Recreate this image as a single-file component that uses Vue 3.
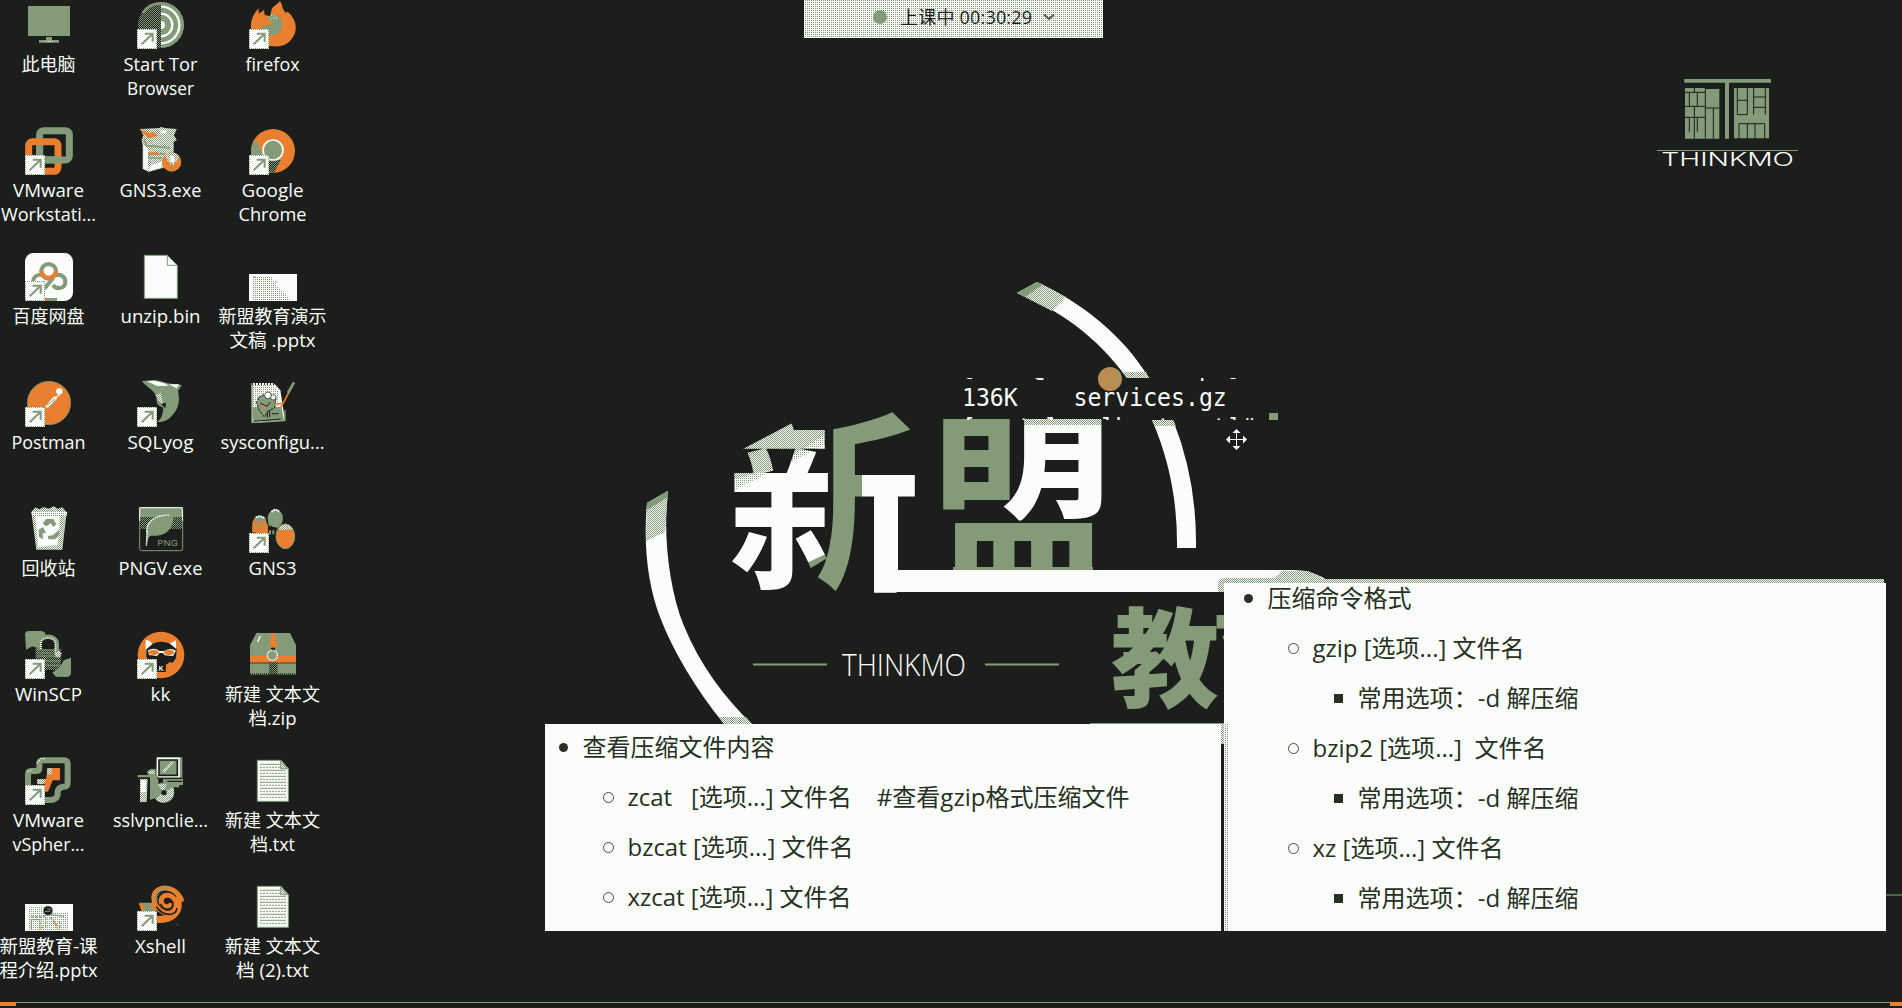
<script setup>
const columns = [
  [
    { icon: 'pc', lines: ['此电脑'], widths: [54] },
    { icon: 'vmware', link: true, lines: ['VMware', 'Workstati...'], widths: [71, 95] },
    { icon: 'netdisk', link: true, lines: ['百度网盘'], widths: [72] },
    { icon: 'postman', link: true, lines: ['Postman'], widths: [74] },
    { icon: 'bin', lines: ['回收站'], widths: [54] },
    { icon: 'winscp', link: true, lines: ['WinSCP'], widths: [67] },
    { icon: 'vsphere', link: true, lines: ['VMware', 'vSpher...'], widths: [71, 72] },
    { icon: 'course', lines: ['新盟教育-课', '程介绍.pptx'], widths: [98, 98] },
  ],
  [
    { icon: 'tor', link: true, lines: ['Start Tor', 'Browser'], widths: [74, 67] },
    { icon: 'box', lines: ['GNS3.exe'], widths: [82] },
    { icon: 'file', lines: ['unzip.bin'], widths: [80] },
    { icon: 'dolphin', link: true, lines: ['SQLyog'], widths: [66] },
    { icon: 'png', lines: ['PNGV.exe'], widths: [84] },
    { icon: 'kk', link: true, lines: ['kk'], widths: [20] },
    { icon: 'installer', lines: ['sslvpnclie...'], widths: [95] },
    { icon: 'xshell', link: true, lines: ['Xshell'], widths: [51] },
  ],
  [
    { icon: 'firefox', link: true, lines: ['firefox'], widths: [54] },
    { icon: 'chrome', link: true, lines: ['Google', 'Chrome'], widths: [62, 68] },
    { icon: 'slides', lines: ['新盟教育演示', '文稿 .pptx'], widths: [108, 86] },
    { icon: 'notepad', lines: ['sysconfigu...'], widths: [104] },
    { icon: 'gns', link: true, lines: ['GNS3'], widths: [48] },
    { icon: 'zip', lines: ['新建 文本文', '档.zip'], widths: [95, 48] },
    { icon: 'text', lines: ['新建 文本文', '档.txt'], widths: [95, 45] },
    { icon: 'text', lines: ['新建 文本文', '档 (2).txt'], widths: [95, 73] },
  ],
]

const viewNotes = [
  { level: 1, text: '查看压缩文件内容', width: 192 },
  { level: 2, text: 'zcat   [选项...] 文件名    #查看gzip格式压缩文件', width: 502 },
  { level: 2, text: 'bzcat [选项...] 文件名', width: 226 },
  { level: 2, text: 'xzcat [选项...] 文件名', width: 224 },
]

const formatNotes = [
  { level: 1, text: '压缩命令格式', width: 144 },
  { level: 2, text: 'gzip [选项...] 文件名', width: 212 },
  { level: 3, text: '常用选项：-d 解压缩', width: 221 },
  { level: 2, text: 'bzip2 [选项...]  文件名', width: 234 },
  { level: 3, text: '常用选项：-d 解压缩', width: 221 },
  { level: 2, text: 'xz [选项...] 文件名', width: 191 },
  { level: 3, text: '常用选项：-d 解压缩', width: 221 },
]
</script>

<template>
  <main class="desktop">
    <svg class="sprite" aria-hidden="true">
      <defs>
        <pattern id="mesh" width="6" height="6" patternUnits="userSpaceOnUse">
          <path d="M0 0h3v3h-3zM3 3h3v3h-3z" fill="#839b79" />
        </pattern>
        <pattern id="dots" width="6" height="6" patternUnits="userSpaceOnUse">
          <path d="M0 0h6v6h-6z" fill="#fbfdfa" /><path d="M0 0h3v3h-3z" fill="#839b79" />
        </pattern>
        <pattern id="weave" width="6" height="6" patternUnits="userSpaceOnUse">
          <path d="M0 0h6v6h-6z" fill="#fbfdfa" /><path d="M0 0h3v3h-3zM3 3h3v3h-3z" fill="#839b79" />
        </pattern>
      </defs>

      <symbol id="i-link" viewBox="0 0 60 60">
        <path d="M0 0h60v60h-60z" fill="#fbfdfa" />
        <path d="M1.500 0v60M58.500 0v60M0 1.500h60M0 58.500h60" stroke="#839b79" stroke-width="3" stroke-dasharray="3 3" />
        <path d="M14 46L46 15M23 14h24v24" fill="none" stroke="#839b79" stroke-width="6" />
      </symbol>

      <symbol id="i-pc" viewBox="0 0 144 144">
        <path d="M9 15h126v90H9z" fill="#839b79" />
        <path d="M63 108h18v9h21v8H42v-8h21z" fill="#839b79" />
        <path d="M63 121h24" stroke="#fbfdfa" stroke-width="3" stroke-dasharray="3 3" />
      </symbol>

      <symbol id="i-tor" viewBox="0 0 144 144">
        <circle cx="72" cy="72" r="69" fill="url(#mesh)" />
        <path d="M14 34A69 69 0 0 1 72 3h6v8h-8A61 61 0 0 0 20 38z" fill="#839b79" />
        <path d="M72 3a69 69 0 0 1 0 138z" fill="#839b79" />
        <path d="M72 60a12 12 0 0 1 0 24z" fill="#fbfdfa" />
        <path d="M72 38a34 34 0 0 1 0 68M72 17a55 55 0 0 1 0 110" fill="none" stroke="#fbfdfa" stroke-width="7" />
      </symbol>

      <symbol id="i-firefox" viewBox="0 0 144 144">
        <path d="M6 81C4 58 12 40 29 22v16l16-11 2 15 16 3 6-24L93 0c6 8 7 19 9 24l9 12 5-4c20 18 29 40 22 63-10 31-38 44-66 41C35 134 9 110 6 81z" fill="#ea7f30" />
        <path d="M57 48c13-14 35-7 40 11 7 20-3 40-23 43-20 2-36-12-37-28h22l12-12-18-7z" fill="#839b79" />
        <path d="M58 48l10-6 11 3 8 7M64 55l11-5 12 7" fill="none" stroke="#fbfdfa" stroke-width="3" stroke-dasharray="3 6" />
        <path d="M60 45l5-25 24-19" fill="none" stroke="#1c1e1b" stroke-width="5" />
      </symbol>

      <symbol id="i-vmware" viewBox="0 0 144 144">
        <rect x="44" y="11" width="89" height="88" rx="12" fill="none" stroke="#839b79" stroke-width="21" />
        <rect x="11" y="44" width="88" height="89" rx="12" fill="none" stroke="#ea7f30" stroke-width="21" />
        <path d="M34 55h20v54H34zM55 88h57v21H55z" fill="#839b79" />
      </symbol>

      <symbol id="i-box" viewBox="0 0 144 144">
        <path d="M9 6l60-3 2-4 12 4 36 3-8 19 8 14-9 6v65l-13 8-62 17-18-9V57L14 39l5-15z" fill="url(#weave)" />
        <path d="M9 6l28 11 16-1 10 11-28 7-4-4-12-9z" fill="#ea7f30" />
        <path d="M20 36l9 20 26 2 44 5M31 83l52-3M32 93h43" fill="none" stroke="#839b79" stroke-width="5" />
        <path d="M19 55l14 8v68l-14-7zM39 116l35-13v18l-38 11zM70 10h18v9H70z" fill="#fbfdfa" />
        <path d="M34 76h32v7H34z" fill="#ea7f30" />
        <circle cx="104" cy="105" r="29" fill="#ea7f30" />
        <path d="M84 86c10-14 37-13 43 5l-9 15H94z" fill="url(#weave)" />
        <path d="M99 86h14l-3 28h-10z" fill="#fbfdfa" /><path d="M104 106v20" stroke="#839b79" stroke-width="5" />
      </symbol>

      <symbol id="i-chrome" viewBox="0 0 144 144">
        <circle cx="72" cy="72" r="66" fill="#ea7f30" />
        <path d="M20 38L53 99 75 137C34 139 6 110 6 72c0-13 5-25 14-34z" fill="#839b79" />
        <path d="M53 99h42l-20 38-25-4z" fill="#1c1e1b" /><path d="M53 99h42l-20 38-25-4z" fill="url(#mesh)" />
        <circle cx="72" cy="69" r="30" fill="#839b79" stroke="#fbfdfa" stroke-width="5" />
      </symbol>

      <symbol id="i-netdisk" viewBox="0 0 144 144">
        <rect width="144" height="144" rx="25" fill="#fbfdfa" />
        <path d="M24 88c-1-15 11-24 28-23" fill="none" stroke="#839b79" stroke-width="11" />
        <path d="M90 68c15-8 31 2 31 18 0 21-26 25-37 10M58 107l26-31" fill="none" stroke="#839b79" stroke-width="12" />
        <circle cx="71" cy="55" r="22" fill="none" stroke="#839b79" stroke-width="12" />
        <path d="M49 52a22 22 0 0 0 44 0" fill="none" stroke="#ea7f30" stroke-width="12" />
        <path d="M60 135h36v9H60z" fill="#839b79" /><path d="M60 135h9v6h-9z" fill="#ea7f30" />
      </symbol>

      <symbol id="i-file" viewBox="0 0 144 144">
        <path d="M22 7h69l30 30v99H22z" fill="#fbfdfa" stroke="#839b79" stroke-width="3" />
        <path d="M91 7v30h30" fill="none" stroke="#839b79" stroke-width="3" />
      </symbol>

      <symbol id="i-slides" viewBox="0 0 144 144">
        <path d="M0 63h144v81H0z" fill="#fbfdfa" />
        <path d="M9 72h59l12 22 24 23 22 24H9z" fill="url(#dots)" />
        <path d="M13 72h6M79 87h4" stroke="#839b79" stroke-width="5" />
      </symbol>

      <symbol id="i-postman" viewBox="0 0 144 144">
        <circle cx="72" cy="72" r="65" fill="#ea7f30" stroke="#839b79" stroke-width="2" />
        <path d="M59 84l27-31 11-2 5-17 10 8-17 14v5L69 86z" fill="#fbfdfa" />
        <path d="M66 79l24-19M73 83l20-18" stroke="#839b79" stroke-width="3" />
        <circle cx="103" cy="37" r="10" fill="#fbfdfa" stroke="#839b79" stroke-width="2" stroke-dasharray="3" />
      </symbol>

      <symbol id="i-dolphin" viewBox="0 0 144 144">
        <path d="M15 6l37-3c18 1 36 11 54 12l29 3-12 17c7 32 1 53-16 73-15 18-31 22-47 21 14-9 20-27 18-44-12-2-21-12-20-28C54 32 31 28 15 6z" fill="#839b79" />
        <path d="M29 7l24-2 27 7 17 8-35 1zM96 16h31l-8 12z" fill="#fbfdfa" />
        <path d="M56 49l16-8 6 35-9-6z" fill="url(#weave)" />
        <path d="M72 75l15-4-2 17z" fill="#1c1e1b" />
      </symbol>

      <symbol id="i-notepad" viewBox="0 0 144 144">
        <path d="M7 12h67l20 22 7 45 7 45-99 8z" fill="#fbfdfa" />
        <path d="M10 16h62l18 23v50H10z" fill="url(#dots)" />
        <path d="M10 84h87l8 40-92 4z" fill="#839b79" />
        <path d="M29 56l13-9 13 9 26-2-4 33-18 8-13 19-15-20-9-23z" fill="#839b79" stroke="#1c1e1b" stroke-width="3" stroke-dasharray="9 3" />
        <circle cx="57" cy="49" r="10" fill="#fbfdfa" stroke="#1c1e1b" stroke-width="2" /><circle cx="73" cy="55" r="8" fill="#fbfdfa" stroke="#1c1e1b" stroke-width="2" />
        <path d="M34 73l20 9 10-13M55 97v19M62 94v20M69 104h20M14 127l81-7" fill="none" stroke="#1c1e1b" stroke-width="3" />
        <path d="M135 11L94 89M76 75l28-2M35 82h12" fill="none" stroke="#ea7f30" stroke-width="5" />
        <path d="M135 10l-18 32" stroke="#839b79" stroke-width="8" />
        <path d="M9 12v119l99-6V93" fill="none" stroke="#839b79" stroke-width="4" />
        <path d="M9 15h68" stroke="#1c1e1b" stroke-width="6" stroke-dasharray="3 6" />
      </symbol>

      <symbol id="i-bin" viewBox="0 0 144 144">
        <path d="M19 21l12-14 12 6 13-7 15 5 16-7 11 7 14-4 13 15-13 112H34z" fill="url(#weave)" />
        <path d="M29 27h75l-2 92-56 6zM31 31h22l5 95H39z" fill="#fbfdfa" />
        <path d="M19 20h108l-3 14H22z" fill="url(#dots)" />
        <g fill="#839b79">
          <path d="M53 56l10-14h22l9 16-9 8-8-11-13 9zM54 66l9 17-10 2 1 18-12-7-1-22zM84 91l18-17 4 14-16 15h-20l-2-10z" />
        </g>
        <path d="M116 34l-15 98" stroke="url(#weave)" stroke-width="12" />
      </symbol>

      <symbol id="i-png" viewBox="0 0 144 144">
        <rect x="8" y="8" width="129" height="129" rx="6" fill="#1c1e1b" stroke="#839b79" stroke-width="3" />
        <path d="M8 48V8h128v40" fill="#839b79" stroke="#fbfdfa" stroke-width="3" />
        <path d="M10 36h125v36H10z" fill="#1c1e1b" /><path d="M10 36h125v36H10z" fill="url(#mesh)" />
        <path d="M28 124l-1-47c1-32 28-49 81-49 4 30-10 63-50 64-12 1-20-3-24 8z" fill="#839b79" />
        <path d="M29 80c2-38 32-49 68-50M31 79l-3 44" fill="none" stroke="#fbfdfa" stroke-width="4" stroke-dasharray="5 2" />
        <text x="61" y="122" fill="#839b79" font-family="Inter, sans-serif" font-size="24" textLength="62" lengthAdjust="spacingAndGlyphs">PNG</text>
      </symbol>

      <symbol id="i-gns" viewBox="0 0 144 144">
        <path d="M39 62l38-8 27 30M50 82h30" fill="none" stroke="#839b79" stroke-width="12" stroke-dasharray="6 4" />
        <ellipse cx="79" cy="40" rx="23" ry="27" fill="#839b79" />
        <path d="M9 82l1-30 8-15h30l9 28v25H46l-5-4z" fill="#ea7f30" />
        <path d="M17 40q16-16 33 0l-3 12H17z" fill="#839b79" />
        <path d="M14 55h36M13 64h39M11 73h30" stroke="#839b79" stroke-width="3" stroke-dasharray="3" />
        <path d="M68 21q11-13 23 0M21 38q12-9 25 2" fill="none" stroke="#fbfdfa" stroke-width="6" stroke-dasharray="5 2" />
        <ellipse cx="109" cy="94" rx="28" ry="37" fill="#ea7f30" stroke="#839b79" stroke-width="3" />
        <path d="M89 76c4-22 35-24 41-3z" fill="url(#weave)" />
      </symbol>

      <symbol id="i-winscp" viewBox="0 0 144 144">
        <path d="M0 6l8-6h43l10 5v10l-15 9-9 14 3 14-18-6L3 56zM138 80v50l-9 8-36-1-11-12 15-11 12-13 7-13z" fill="#839b79" />
        <path d="M31 51l16 4h54l9 10-4 52H60V84H32z" fill="url(#mesh)" />
        <path d="M34 57h76M34 66h76M34 75h74M60 90h46M60 103h46" stroke="#839b79" stroke-width="3" />
        <path d="M43 55V37c0-27 52-28 53 1v21" fill="none" stroke="#839b79" stroke-width="12" />
        <path d="M48 54V36c1-20 42-20 43 2v25" fill="none" stroke="#fbfdfa" stroke-width="6" stroke-dasharray="3 3" />
        <path d="M88 63l14-4 7 8-5 12H92z" fill="url(#weave)" />
      </symbol>

      <symbol id="i-kk" viewBox="0 0 144 144">
        <circle cx="72" cy="72" r="70" fill="#ea7f30" />
        <path d="M27 52Q22 88 42 112M44 30Q72 16 97 30" fill="none" stroke="#839b79" stroke-width="3" stroke-dasharray="6 5" />
        <path d="M26 56V27q11 0 21 13zM97 38l20-10v26l-10 2z" fill="#fbfdfa" />
        <path d="M29 55l18-17q25-11 52 0l20 17-2 26-13 19-21 13H62L37 98 28 76z" fill="#1c1e1b" />
        <path d="M33 58q18-10 35 2h13q21-12 36-1l-9 16-25-2-5-7H68l-8 9-24-3z" fill="#fbfdfa" />
        <ellipse cx="50" cy="64" rx="15" ry="8" fill="#ea7f30" /><ellipse cx="96" cy="64" rx="15" ry="8" fill="#ea7f30" />
        <path d="M86 102l13-9 9 3 10-10 2 26-30 14z" fill="#ea7f30" />
        <path d="M61 102h25v21H61z" fill="#1c1e1b" />
        <text x="65" y="121" fill="#fbfdfa" font-family="Liberation Sans, sans-serif" font-size="20" font-weight="700">K</text>
      </symbol>

      <symbol id="i-zip" viewBox="0 0 144 144">
        <path d="M22 6h101l18 36v89H3V42z" fill="#839b79" />
        <path d="M3 75h138v21H3z" fill="#ea7f30" /><path d="M4 96h137" stroke="#1c1e1b" stroke-width="4" stroke-dasharray="3" />
        <path d="M60 50l9-44h8l8 44z" fill="#ea7f30" />
        <path d="M61 93h24v39H61z" fill="#1c1e1b" /><path d="M61 93h24v39H61z" fill="url(#mesh)" />
        <path d="M66 50h12v12H66z" fill="#1c1e1b" />
        <circle cx="70" cy="73" r="15" fill="#839b79" stroke="#fbfdfa" stroke-width="5" stroke-dasharray="3 2" />
        <path d="M34 15l-8 18" stroke="#fbfdfa" stroke-width="4" /><path d="M3 129h138" stroke="#1c1e1b" stroke-width="4" stroke-dasharray="3" />
      </symbol>

      <symbol id="i-vsphere" viewBox="0 0 144 144">
        <path d="M9 100V52q0-10 10-10h14q10 0 10-10V20q0-10 12-10h62q11 0 11 12v56q0 12-15 12-14 2-15 15v8q-4 16-23 16H50" fill="none" stroke="#839b79" stroke-width="18" />
        <path d="M36 18L47 5h11M8 45l12-7" fill="none" stroke="#fbfdfa" stroke-width="4" stroke-dasharray="4" />
        <path d="M68 33h37v37H83L69 104h-9V82H38V66h25z" fill="#ea7f30" />
        <path d="M36 67h27l-7 14H37zM67 34h13v18H66z" fill="url(#weave)" />
      </symbol>

      <symbol id="i-installer" viewBox="0 0 144 144">
        <path d="M59 1h77v62h2v21h-11v7H78V65H56z" fill="#839b79" />
        <path d="M63 5h62v53H63z" fill="#839b79" stroke="#fbfdfa" stroke-width="7" /><path d="M66 9h55v46H66z" fill="none" stroke="#1c1e1b" stroke-width="5" />
        <path d="M76 42l26-29 10 1-31 34z" fill="url(#weave)" />
        <path d="M29 44l12-8h15v19h8v66l-25 7V64z" fill="#839b79" /><path d="M9 66h23l-3 69H9zM36 41h17v10H36z" fill="url(#weave)" />
        <path d="M2 54h34v7H2z" fill="#839b79" /><path d="M12 70h15v35H12z" fill="#fbfdfa" />
        <circle cx="81" cy="107" r="31" fill="#839b79" /><path d="M55 125L79 107l30-16q8 33-21 43-22 7-33-9zM62 82l19 25 7-27z" fill="url(#weave)" />
        <circle cx="81" cy="107" r="8" fill="#1c1e1b" /><path d="M60 64h76M91 73h45" stroke="#1c1e1b" stroke-width="4" />
      </symbol>

      <symbol id="i-text" viewBox="0 0 144 144">
        <path d="M25 10h71l22 25v98H25z" fill="#fbfdfa" stroke="#839b79" stroke-width="3" />
        <path d="M94 11v24h23z" fill="url(#weave)" stroke="#839b79" stroke-width="3" />
        <path d="M33 22h59M33 40h78M33 58h78M33 76h78M33 94h78M33 112h78" stroke="#839b79" stroke-width="3" />
        <path d="M33 31h59M33 49h78M33 67h78M33 85h78M33 103h78M33 121h78" stroke="#839b79" stroke-width="3" stroke-dasharray="6 3" />
      </symbol>

      <symbol id="i-course" viewBox="0 0 144 144">
        <path d="M0 63h144v81H0z" fill="#fbfdfa" />
        <path d="M9 71h46v17h74v53H9z" fill="url(#dots)" />
        <path d="M18 102h34l17-8 48 6M19 138v-28h26v25M62 103v29M76 103l24 29M104 115v22" fill="none" stroke="#839b79" stroke-width="4" stroke-dasharray="9 3" />
        <circle cx="69" cy="83" r="14" fill="#1c1e1b" stroke="#839b79" stroke-width="2" /><path d="M60 85h16M67 77l10 3" stroke="#839b79" stroke-width="3" />
        <path d="M86 116l14 25M42 140l12-9" stroke="#ea7f30" stroke-width="4" stroke-dasharray="6 3" />
      </symbol>

      <symbol id="i-xshell" viewBox="0 0 144 144">
        <path d="M6 59h40l12 20-8 25H10L15 76z" fill="#839b79" /><path d="M6 62h10l6 16-8 8zM38 60h14l7 15-8 10z" fill="#ea7f30" />
        <path d="M135 56C126 26 95 7 68 18 39 31 49 71 76 86c24 13 48-5 39-31C107 29 68 32 73 58c3 15 25 19 31 3" fill="none" stroke="#ea7f30" stroke-width="15" />
        <path d="M119 41c18 51-21 71-62 68" fill="none" stroke="#ea7f30" stroke-width="21" />
        <path d="M57 55C54 25 73 10 100 17" fill="none" stroke="url(#mesh)" stroke-width="12" />
        <path d="M71 63q5 16 22 16 18-2 14-24M58 71q20 28 47 22 14-4 15-18" fill="none" stroke="#1c1e1b" stroke-width="5" />
        <path d="M119 124h3v3h-3z" fill="#839b79" />
      </symbol>
    </svg>

    <svg class="wallpaper" viewBox="0 0 1902 1008" aria-label="新盟教育">
      <defs>
        <pattern id="grain" width="2" height="2" patternUnits="userSpaceOnUse">
          <path d="M0 0h2v2h-2z" fill="#fbfdfa" /><path d="M0 0h1v1h-1zM1 1h1v1h-1z" fill="#839b79" />
        </pattern>
        <pattern id="speck" width="2" height="2" patternUnits="userSpaceOnUse">
          <path d="M0 0h2v2h-2z" fill="#fbfdfa" /><path d="M0 0h1v1h-1z" fill="#839b79" />
        </pattern>
        <pattern id="xinPaint" width="1902" height="1008" patternUnits="userSpaceOnUse">
          <path d="M0 0h1902v1008H0z" fill="#fbfdfa" />
          <path d="M730 440L840 400V440L820 447 730 492z" fill="url(#speck)" />
          <path d="M730 440L840 395V425L770 470 730 480z" fill="url(#grain)" />
          <path d="M700 400H838V399L743 449H700z" fill="#1c1e1b" />
          <path d="M831 390H960V460H862V600H800V566L826 554 831 540z" fill="#839b79" />
        </pattern>
        <pattern id="mengPaint" width="1902" height="1008" patternUnits="userSpaceOnUse">
          <path d="M0 0h1902v1008H0z" fill="#839b79" />
          <path d="M1012 300H1120V520H990V505L1012 499z" fill="#fbfdfa" />
          <path d="M1012 419H1120V425H1012z" fill="url(#grain)" />
          <path d="M900 530H953V600H900zM1093 530H1140V600H1093z" fill="#1c1e1b" />
        </pattern>
        <clipPath id="mengWindow"><path d="M900 419H1140V620H900z" /></clipPath>
      </defs>

      <path d="M647 503L668 491C663 530 668 587 684 626C700 665 724 697 752 724H724C695 688 673 651 660 617C648 586 643 545 647 503z" fill="#fbfdfa" />
      <path d="M647 503L668 491L665 532L646 541z" fill="url(#grain)" />
      <path d="M647 503L668 491V497L647 510z" fill="#839b79" />
      <path d="M719 717H746L752 724H724z" fill="url(#grain)" />
      <path d="M1017 293L1037 282C1081 302 1124 336 1149 378H1127C1096 336 1061 311 1017 293z" fill="#fbfdfa" />
      <path d="M1017 293L1037 282L1066 297L1052 311z" fill="url(#grain)" />
      <path d="M1017 293L1037 282L1042 285L1025 297z" fill="#839b79" />
      <path d="M1122 372H1146L1149 378H1127z" fill="url(#grain)" />
      <path d="M1152 420H1173Q1197 480 1196 548H1177Q1178 480 1152 420z" fill="#fbfdfa" />
      <path d="M1152 420H1173L1176 426H1155z" fill="url(#grain)" />

      <text class="hero" x="727" y="576" font-size="194" fill="url(#xinPaint)">新</text>
      <g clip-path="url(#mengWindow)">
        <text class="hero" x="926" y="575" font-size="194" fill="url(#mengPaint)">盟</text>
      </g>
      <path d="M876 483H898V570H1294Q1314 570 1332 583L1224 592H876z" fill="#fbfdfa" />
      <path d="M1218 592V582Q1220 578 1226 578H1275L1282 571H1308L1332 583H1224V592z" fill="url(#grain)" />
      <text class="hero heavy" x="1111" y="699" font-size="108" letter-spacing="-8" fill="#839b79">教育</text>

      <path d="M753 664.500H827M985 664.500H1059" stroke="#839b79" stroke-width="2" />
      <text class="thin" x="842" y="676" textLength="124" lengthAdjust="spacingAndGlyphs">THINKMO</text>
      <path d="M1090 723.500H1224M1886 895H1902" stroke="#839b79" />
      <path d="M1220.500 724h4v20h-4z" fill="url(#grain)" />
      <path d="M0 1002.500H1902" stroke="#839b79" />
      <path d="M0 1002H16V1006H0zM1890 1002H1902V1006H1890z" fill="#ea7f30" />
    </svg>

    <svg class="brand" viewBox="0 0 540 360" aria-label="THINKMO">
      <g fill="#839b79">
        <path d="M133 57H393V68H267V236H255V68H133zM135 84h103v152H135zM282 84h105v151H282z" />
        <path d="M51 270h423v3H51z" />
      </g>
      <g fill="none" stroke="#1c1e1b" stroke-width="3">
        <path d="M135 97h61M196 84v152M163 84v13M148 97v42M172 97v42M135 139h61M163 139v97M135 172h61M148 174v42M172 174v42M196 144h42M220 144v92" />
        <path d="M196 85.500h42M292 84v80h30V84M292 121h30M341 84v80M376 84v80M341 111h35M341 142h35M297 235v-44h77v44M322 191v44M345 191v44" />
      </g>
      <text x="64" y="319" textLength="398" lengthAdjust="spacingAndGlyphs">THINKMO</text>
    </svg>

    <nav class="icons">
      <div v-for="(column, c) in columns" :key="c" class="column">
        <div v-for="(item, r) in column" :key="r" class="item">
          <div class="glyph">
            <svg class="picture"><use :href="'#i-' + item.icon" /></svg>
            <svg v-if="item.link" class="arrow"><use href="#i-link" /></svg>
          </div>
          <svg v-for="(line, n) in item.lines" :key="n" class="caption" viewBox="0 0 112 24">
            <text x="55.500" y="18.500" text-anchor="middle" :textLength="item.widths[n]" lengthAdjust="spacingAndGlyphs">{{ line }}</text>
          </svg>
        </div>
      </div>
    </nav>

    <header class="session">
      <i class="dot"></i>
      <span class="clock">上课中 00:30:29</span>
      <svg class="chevron" viewBox="0 0 12 8"><path d="M1 1.500L6 6L11 1.500" /></svg>
    </header>

    <section class="terminal">
      <pre class="shell">[root@localhost opt]#
136K    services.gz
[root@localhost opt]#</pre>
      <i class="caret"></i>
    </section>
    <i class="laser"></i>
    <svg class="pointer" viewBox="0 0 21 21">
      <path d="M10.500 2V19M2 10.500H19" />
      <path class="tips" d="M10.500 0l4 4h-8zM10.500 21l4-4h-8zM0 10.500l4-4v8zM21 10.500l-4-4v8z" />
    </svg>

    <section class="notes left">
      <div v-for="(note, n) in viewNotes" :key="n" class="note" :class="'level' + note.level">
        <i class="bullet"></i>
        <svg class="line"><text x="-0.500" y="33" :textLength="note.width" lengthAdjust="spacingAndGlyphs">{{ note.text }}</text></svg>
      </div>
    </section>
    <section class="notes right">
      <div v-for="(note, n) in formatNotes" :key="n" class="note" :class="'level' + note.level">
        <i class="bullet"></i>
        <svg class="line"><text x="-0.500" y="33" :textLength="note.width" lengthAdjust="spacingAndGlyphs">{{ note.text }}</text></svg>
      </div>
    </section>
  </main>
</template>

<style>
body { background: #1c1e1b; overflow: hidden; }
</style>

<style scoped>
.desktop {
  --ink: #1c1e1b;
  --sage: #839b79;
  --paper: #fbfdfa;
  --orange: #ea7f30;
  position: relative;
  width: 1902px;
  height: 1008px;
  overflow: hidden;
  background: var(--ink);
  font-family: "Open Sans", "Noto Sans CJK SC", sans-serif;
}
.sprite { position: absolute; width: 0; height: 0; }
.wallpaper { position: absolute; inset: 0; width: 1902px; height: 1008px; }
.hero { font-family: "Noto Sans CJK SC", sans-serif; font-weight: 700; }
.heavy { font-weight: 900; }
.thin { fill: var(--paper); font-family: "Open Sans", sans-serif; font-weight: 300; font-size: 32px; }
.brand { position: absolute; left: 1640px; top: 60px; width: 180px; height: 120px; }
.brand text { fill: var(--paper); font-family: Inter, sans-serif; font-weight: 300; font-size: 54px; }

.icons { position: absolute; left: -7px; top: 1px; display: flex; }
.column { width: 112px; display: flex; flex-direction: column; }
.item { height: 126px; display: flex; flex-direction: column; align-items: center; }
.glyph { position: relative; width: 48px; height: 48px; margin-bottom: 3px; }
.picture { display: block; width: 48px; height: 48px; }
.arrow { position: absolute; left: 0; bottom: 0; width: 20px; height: 20px; }
.caption { flex: none; width: 112px; height: 24px; overflow: visible; }
.caption text { fill: var(--paper); font-size: 18px; white-space: pre; }

.session {
  position: absolute;
  left: 804px;
  top: 0;
  width: 299px;
  height: 38px;
  display: flex;
  align-items: center;
  padding: 0 0 4px 69px;
  box-sizing: border-box;
  background: conic-gradient(var(--sage) 25%, var(--paper) 0) 0 0 / 2px 2px;
  color: var(--ink);
}
.dot { width: 14px; height: 14px; border-radius: 50%; background: var(--sage); }
.clock { margin-left: 13px; font-size: 18px; line-height: 34px; white-space: pre; letter-spacing: 0.2px; }
.chevron { width: 12px; height: 8px; margin-left: 11px; }
.chevron path { fill: none; stroke: #4c5b46; stroke-width: 2; }

.terminal { position: absolute; left: 950px; top: 378px; width: 340px; height: 42px; overflow: hidden; }
.shell {
  margin: -25px 0 0 12px;
  color: var(--paper);
  font: 25px/30px "DejaVu Sans Mono", monospace;
  transform: scaleX(0.926);
  transform-origin: 0 0;
}
.caret { position: absolute; left: 319px; top: 35px; width: 9px; height: 7px; background: var(--sage); }
.laser {
  position: absolute;
  left: 1098px;
  top: 367px;
  width: 24px;
  height: 24px;
  border-radius: 50%;
  background: conic-gradient(var(--sage) 25%, var(--orange) 0 50%, var(--sage) 0 75%, var(--orange) 0) 0 0 / 2px 2px;
}
.pointer { position: absolute; left: 1226px; top: 429px; width: 21px; height: 21px; }
.pointer path { stroke: var(--paper); fill: none; stroke-width: 1; }
.pointer .tips { fill: var(--paper); stroke: none; }

.notes { position: absolute; box-sizing: border-box; background: var(--paper); }
.left { left: 545px; top: 724px; width: 676px; height: 207px; padding-left: 14px; }
.right { left: 1224px; top: 583px; width: 662px; height: 348px; padding-left: 20px; }
.right::before {
  content: "";
  position: absolute;
  left: 0;
  top: -4px;
  width: 660px;
  height: 4px;
  background: conic-gradient(var(--sage) 25%, var(--paper) 0 50%, var(--sage) 0 75%, var(--paper) 0) 0 0 / 2px 2px;
}
.right::after {
  content: "";
  position: absolute;
  left: 0;
  top: 141px;
  width: 4px;
  height: 207px;
  background: conic-gradient(var(--sage) 25%, var(--paper) 0) 0 0 / 2px 2px;
}
.note { height: 50px; display: flex; align-items: center; }
.left .note:first-child { margin-top: -1.5px; }
.right .note:first-child { margin-top: -9.5px; }
.level2 { padding-left: 45px; }
.level3 { padding-left: 90px; }
.bullet { flex: none; width: 9px; height: 9px; margin-right: 15px; box-sizing: border-box; border-radius: 50%; background: #263023; }
.level2 .bullet { width: 11px; height: 11px; margin: 0 14px 0 -1px; border: 1px solid #41503b; background: none; }
.level3 .bullet { border-radius: 0; }
.line { flex: 1; height: 50px; overflow: visible; }
.line text { fill: #263023; font-size: 24px; white-space: pre; }
</style>
